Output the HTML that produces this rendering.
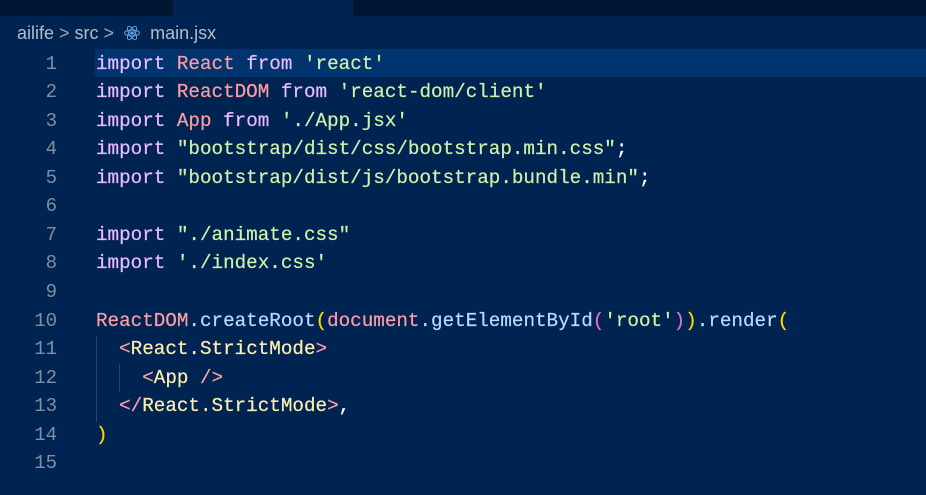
<!DOCTYPE html>
<html><head><meta charset="utf-8"><style>
body{margin:0;width:926px;height:495px;background:#002451;overflow:hidden;position:relative;font-family:"Liberation Mono",monospace}
.tabs{position:absolute;left:0;top:0;width:926px;height:16px;background:#001733}
.tab{position:absolute;left:172px;top:0;width:180px;height:16px;background:#002451;border-left:1px solid #0b1a2a;border-right:1px solid #0b1a2a}
.bc{position:absolute;left:17px;top:20px;height:26px;font:18px "Liberation Sans",sans-serif;color:#b4bcc8;line-height:26px;white-space:nowrap}
.hl{position:absolute;left:95px;top:49px;width:831px;height:28px;background:#00346e}
.ln{position:absolute;left:0;width:57px;text-align:right;color:#7f8ea3;font-size:19px}
.code{position:absolute;left:96px;font-size:19.25px;white-space:pre;color:#fff;-webkit-text-stroke:0.2px}
.k{color:#ebbbff}.v{color:#ff9da4}.s{color:#d1f1a9}.f{color:#bbdaff}.y{color:#ffd700}.p{color:#da70d6}.t{color:#ffeead}
.guide{position:absolute;width:1px;background:#2c4570}
</style></head><body>
<div class="tabs"><div class="tab"></div></div>
<div class="bc">ailife <span style="color:#9aa">&gt;</span> src <span style="color:#9aa">&gt;</span> <svg width="18" height="18" viewBox="0 0 24 24" style="vertical-align:-3px;margin:0 4px" fill="none" stroke="#61a6e8" stroke-width="1.3"><ellipse cx="12" cy="12" rx="10" ry="4"/><ellipse cx="12" cy="12" rx="10" ry="4" transform="rotate(60 12 12)"/><ellipse cx="12" cy="12" rx="10" ry="4" transform="rotate(120 12 12)"/><circle cx="12" cy="12" r="1.6" fill="#61a6e8"/></svg> main.jsx</div>
<div class="hl"></div>
<div class="guide" style="left:96px;top:336px;height:86px"></div>
<div class="guide" style="left:119px;top:364px;height:28px"></div>
<div id="lines"></div>
<script>
const L=[
'<span class="k">import</span> <span class="v">React</span> <span class="k">from</span> <span class="s">\'react\'</span>',
'<span class="k">import</span> <span class="v">ReactDOM</span> <span class="k">from</span> <span class="s">\'react-dom/client\'</span>',
'<span class="k">import</span> <span class="v">App</span> <span class="k">from</span> <span class="s">\'./App.jsx\'</span>',
'<span class="k">import</span> <span class="s">"bootstrap/dist/css/bootstrap.min.css"</span>;',
'<span class="k">import</span> <span class="s">"bootstrap/dist/js/bootstrap.bundle.min"</span>;',
'',
'<span class="k">import</span> <span class="s">"./animate.css"</span>',
'<span class="k">import</span> <span class="s">\'./index.css\'</span>',
'',
'<span class="v">ReactDOM</span><span class="f">.createRoot</span><span class="y">(</span><span class="v">document</span><span class="f">.getElementById</span><span class="p">(</span><span class="s">\'root\'</span><span class="p">)</span><span class="y">)</span><span class="f">.render</span><span class="y">(</span>',
'  <span class="v">&lt;</span><span class="t">React.StrictMode</span><span class="v">&gt;</span>',
'    <span class="v">&lt;</span><span class="t">App</span> <span class="v">/&gt;</span>',
'  <span class="v">&lt;/</span><span class="t">React.StrictMode</span><span class="v">&gt;</span>,',
'<span class="y">)</span>',
''];
let h='';
L.forEach((c,i)=>{const top=50.5+i*28.57;h+=`<div class="ln" style="top:${top}px;line-height:27px">${i+1}</div><div class="code" style="top:${top}px;line-height:27px">${c}</div>`});
document.getElementById('lines').innerHTML=h;
</script>
</body></html>
